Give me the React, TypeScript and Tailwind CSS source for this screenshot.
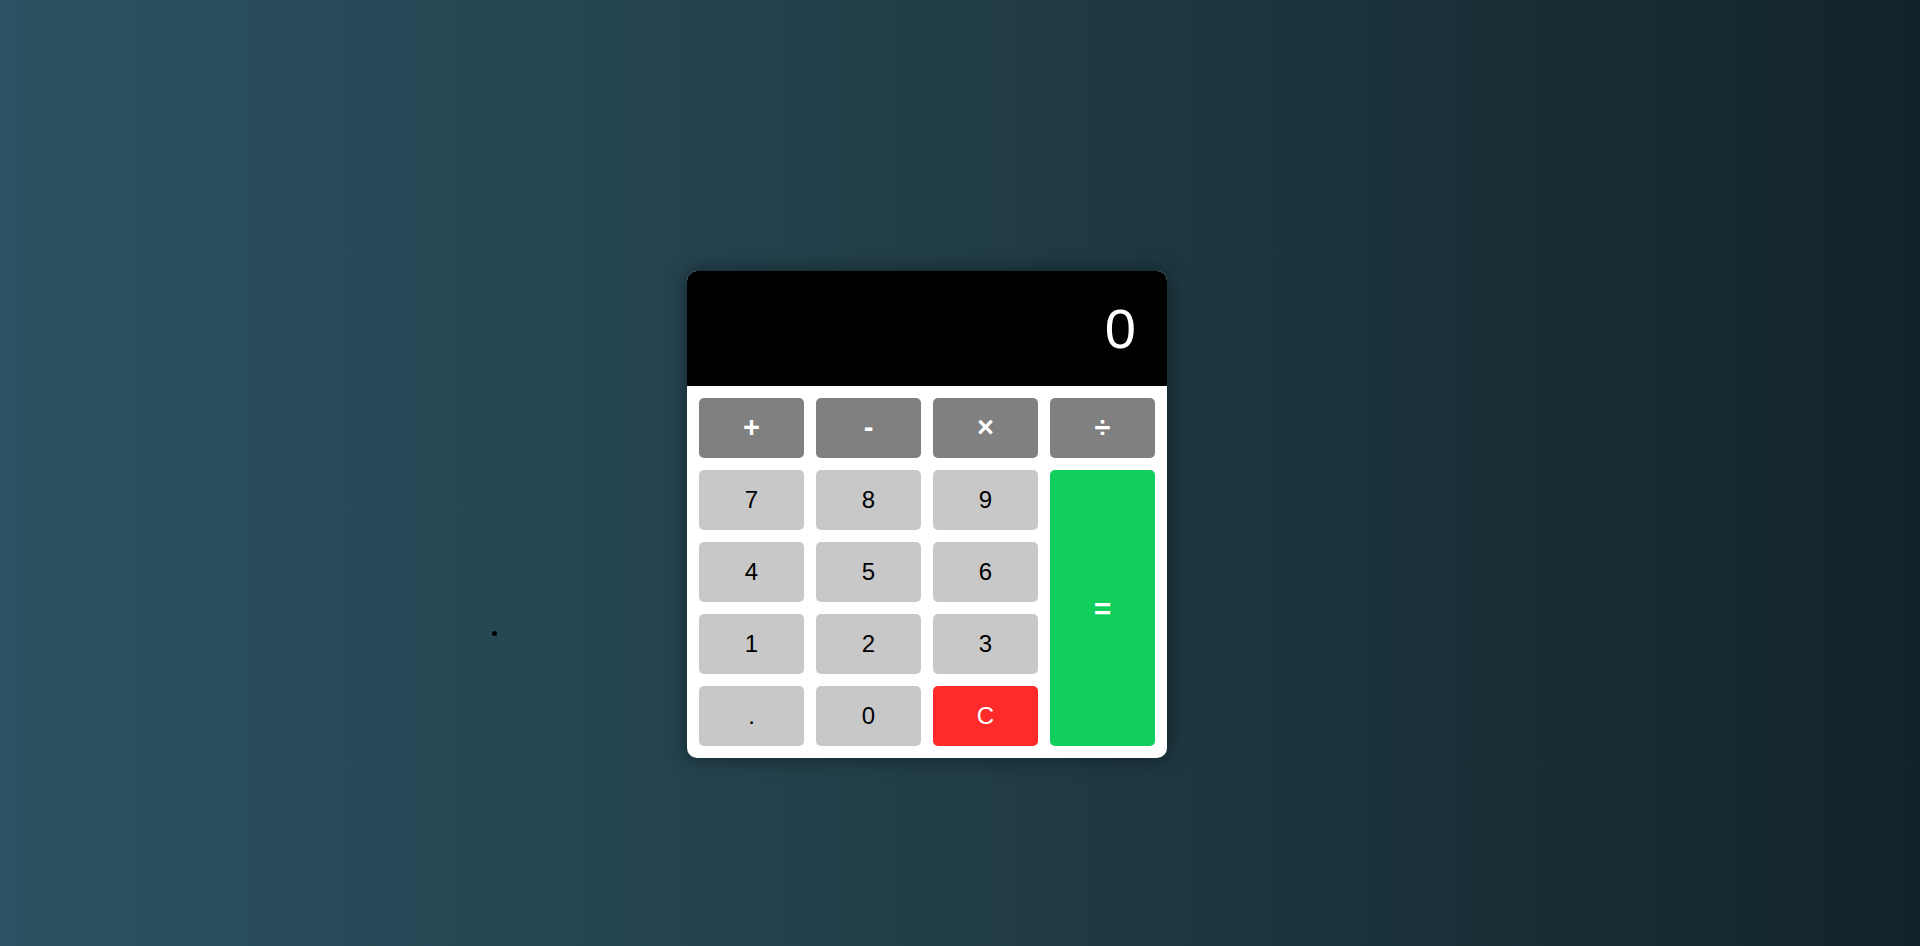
import React, { useState } from 'react';

const ops = ['+', '-', '×', '÷'];

export default function App() {
  const [display, setDisplay] = useState('0');

  const press = (k: string) => {
    if (k === 'C') return setDisplay('0');
    if (k === '=') {
      try {
        const expr = display.replace(/×/g, '*').replace(/÷/g, '/');
        // eslint-disable-next-line no-new-func
        const r = Function(`return (${expr})`)();
        setDisplay(String(r));
      } catch {
        setDisplay('Error');
      }
      return;
    }
    setDisplay(display === '0' && k !== '.' ? k : display + k);
  };

  const digit = 'h-[60px] rounded-[5px] bg-[#c8c8c8] text-black text-[24px]';

  return (
    <div
      className="relative h-screen w-full overflow-hidden bg-gradient-to-r from-[#2b5262] via-[#213d47] to-[#12242a] pt-[271px] pl-[687px]"
      style={{ fontFamily: '"Liberation Sans", Arial, sans-serif' }}
    >
      <span className="absolute left-[492px] top-[631px] h-[5px] w-[5px] rounded-full bg-black" />
      <div className="w-[480px] overflow-hidden rounded-[10px] bg-white shadow-[0_0_20px_rgba(0,0,0,0.45)]">
        <div className="flex h-[115px] items-center justify-end bg-black pr-[31px] text-[56px] leading-none text-white">
          {display}
        </div>
        <div className="grid grid-cols-4 gap-3 p-3">
          {ops.map((o) => (
            <button
              key={o}
              onClick={() => press(o)}
              className="h-[60px] rounded-[5px] bg-[#808080] text-[29px] font-bold text-white"
            >
              {o}
            </button>
          ))}
          <button onClick={() => press('7')} className={digit}>7</button>
          <button onClick={() => press('8')} className={digit}>8</button>
          <button onClick={() => press('9')} className={digit}>9</button>
          <button
            onClick={() => press('=')}
            className="row-span-4 rounded-[5px] bg-[#10cf5c] text-[30px] font-bold text-white"
          >
            =
          </button>
          <button onClick={() => press('4')} className={digit}>4</button>
          <button onClick={() => press('5')} className={digit}>5</button>
          <button onClick={() => press('6')} className={digit}>6</button>
          <button onClick={() => press('1')} className={digit}>1</button>
          <button onClick={() => press('2')} className={digit}>2</button>
          <button onClick={() => press('3')} className={digit}>3</button>
          <button onClick={() => press('.')} className={digit}>.</button>
          <button onClick={() => press('0')} className={digit}>0</button>
          <button
            onClick={() => press('C')}
            className="h-[60px] rounded-[5px] bg-[#ff2a2a] text-[24px] text-white"
          >
            C
          </button>
        </div>
      </div>
    </div>
  );
}
